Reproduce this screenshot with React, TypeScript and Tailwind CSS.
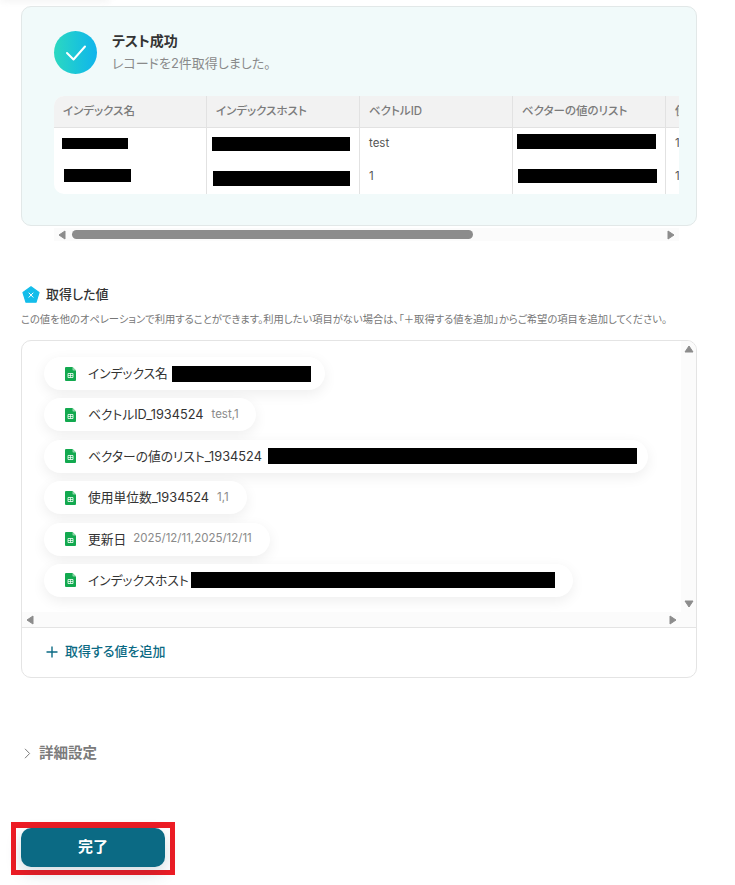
import React from 'react';

const rows = [
  { label: 'インデックス名', bar: 139, value: '', pr: 'pr-[14px]', gap: 'ml-[4px]' },
  { label: 'ベクトルID_1934524', bar: 0, value: 'test,1', pr: 'pr-[17px]', gap: 'ml-[8px]' },
  { label: 'ベクターの値のリスト_1934524', bar: 369, value: '', pr: 'pr-[11px]', gap: 'ml-[6px]' },
  { label: '使用単位数_1934524', bar: 0, value: '1,1', pr: 'pr-[18px]', gap: 'ml-[8px]' },
  { label: '更新日', bar: 0, value: '2025/12/11,2025/12/11', pr: 'pr-[18px]', gap: 'ml-[7px]' },
  { label: 'インデックスホスト', bar: 364, value: '', pr: 'pr-[18px]', gap: 'ml-[2px]' },
];

function Arrow({ dir }: { dir: 'left' | 'right' | 'up' | 'down' }) {
  const pts = {
    left: '8,1 8,9 2,5',
    right: '2,1 2,9 8,5',
    up: '1,8 9,8 5,2',
    down: '1,2 9,2 5,8',
  }[dir];
  return (
    <svg width="10" height="10" viewBox="0 0 10 10" className="shrink-0">
      <polygon points={pts} fill="#8c8c8c" stroke="#8c8c8c" strokeWidth="1" strokeLinejoin="round" />
    </svg>
  );
}

function SheetIcon() {
  return (
    <svg width="11" height="14" viewBox="0 0 11 14" className="shrink-0">
      <path d="M1 0h6.5L11 3.5V13a1 1 0 0 1-1 1H1a1 1 0 0 1-1-1V1a1 1 0 0 1 1-1z" fill="#12a94f" />
      <path d="M7.5 0L11 3.5H8.2a.7.7 0 0 1-.7-.7z" fill="#8ed5a8" />
      <path d="M3 6.5h5v4H3z" fill="none" stroke="#fff" strokeWidth="0.8" />
      <path d="M3 8.5h5M5.5 6.5v4" stroke="#fff" strokeWidth="0.7" />
    </svg>
  );
}

function Pill({ row }: { row: (typeof rows)[number] }) {
  return (
    <div className={`flex h-[33px] w-fit items-center rounded-full bg-white pl-[21px] shadow-[0_4px_14px_rgba(0,0,0,0.07)] ${row.pr}`}>
      <SheetIcon />
      <span className="ml-[12px] whitespace-nowrap text-[12.75px] text-[#333333]">{row.label}</span>
      {row.bar > 0 && <span className={`h-[16px] bg-black ${row.gap}`} style={{ width: row.bar }} />}
      {row.value && <span className={`whitespace-nowrap text-[11.5px] text-[#8a8a8a] ${row.gap}`}>{row.value}</span>}
    </div>
  );
}

const headCell = 'w-[153px] shrink-0 border-r border-[#e2e2e2] pl-[9px] text-[11.5px] font-medium leading-[31px] text-[#7b7b7b] whitespace-nowrap';
const bodyCell = 'relative h-[33px] w-[153px] shrink-0 border-r border-[#e2e2e2] pl-[9px] text-[11.5px] leading-[31px] text-[#555555] whitespace-nowrap';

export default function App() {
  return (
    <div className="relative h-[885px] w-[735px] overflow-hidden bg-white font-['Inter','Noto_Sans_CJK_JP',sans-serif] [font-feature-settings:'palt'] [will-change:opacity]">
      <div className="absolute left-0 top-[-6px] h-[8px] w-[110px] rounded-full bg-[#f4f4f4] blur-[3px]" />

      <div className="pl-[21px] pt-[6px]">
        <div className="h-[220px] w-[676px] rounded-[10px] border border-[#e2e8e8] bg-[#f1fafa] pl-[32px] pt-[24px]">
          <div className="flex items-center gap-[15px]">
            <div className="flex h-[43px] w-[43px] items-center justify-center rounded-full bg-gradient-to-r from-[#2cd8c0] to-[#12b4ec]">
              <svg width="22" height="18" viewBox="0 0 22 18" fill="none">
                <path d="M2 9l6.5 6.5L20 2.5" stroke="#fff" strokeWidth="2" strokeLinecap="round" strokeLinejoin="round" />
              </svg>
            </div>
            <div className="mt-[-1px]">
              <div className="text-[14px] font-bold leading-[20px] text-[#333333]">テスト成功</div>
              <div className="mt-[2px] text-[13px] leading-[20px] text-[#8a8a8a]">レコードを2件取得しました。</div>
            </div>
          </div>

          <div className="mt-[22px] w-[625px] overflow-hidden rounded-l-[10px] bg-white">
            <div className="flex h-[32px] w-[800px] border-b border-[#e2e2e2] bg-[#f2f2f2]">
              <div className={headCell}>インデックス名</div>
              <div className={headCell}>インデックスホスト</div>
              <div className={headCell}>ベクトルID</div>
              <div className={headCell}>ベクターの値のリスト</div>
              <div className={headCell}>使用単位数</div>
            </div>
            <div className="flex w-[800px]">
              <div className={bodyCell}><span className="absolute left-[8px] top-[10px] h-[11px] w-[66px] bg-black" /></div>
              <div className={bodyCell}><span className="absolute left-[5px] top-[9px] h-[14px] w-[138px] bg-black" /></div>
              <div className={bodyCell}>test</div>
              <div className={bodyCell}><span className="absolute left-[4px] top-[6px] h-[15px] w-[139px] bg-black" /></div>
              <div className={bodyCell}>1</div>
            </div>
            <div className="flex w-[800px]">
              <div className={bodyCell}><span className="absolute left-[10px] top-[8px] h-[13px] w-[67px] bg-black" /></div>
              <div className={bodyCell}><span className="absolute left-[6px] top-[10px] h-[15px] w-[137px] bg-black" /></div>
              <div className={bodyCell}>1</div>
              <div className={bodyCell}><span className="absolute left-[5px] top-[8px] h-[14px] w-[139px] bg-black" /></div>
              <div className={bodyCell}>1</div>
            </div>
          </div>
        </div>

        <div className="ml-[33px] mt-[2px] flex h-[13px] w-[625px] items-center bg-[#fbfbfb] pl-[3px] pr-[3px]">
          <Arrow dir="left" />
          <div className="ml-[5px] h-[9px] w-[401px] rounded-full bg-[#8c8c8c]" />
          <div className="flex-1" />
          <Arrow dir="right" />
        </div>

        <div className="ml-[1px] mt-[45px] flex h-[18px] items-center gap-[6px]">
          <svg width="18" height="18" viewBox="0 0 18 18">
            <path d="M9 .8l8 5.7-3 9.7H4L1 6.5z" fill="#14bdea" stroke="#14bdea" strokeWidth="1.2" strokeLinejoin="round" />
            <path d="M7 7l4 4.2M11 7l-4 4.2" stroke="#fff" strokeWidth="1" strokeLinecap="round" />
          </svg>
          <span className="text-[13px] font-medium text-[#333333]">取得した値</span>
        </div>
        <p className="mt-[8px] whitespace-nowrap text-[10.3px] leading-[14px] text-[#777777]">
          この値を他のオペレーションで利用することができます。利用したい項目がない場合は、「＋取得する値を追加」からご希望の項目を追加してください。
        </p>

        <div className="mt-[14px] w-[676px] overflow-hidden rounded-[10px] border border-[#e4e4e4] bg-white">
          <div className="flex h-[286px]">
            <div className="flex flex-1 flex-col">
              <div className="flex flex-1 flex-col gap-[8.4px] pl-[22px] pt-[16px]">
                {rows.map((row) => (
                  <Pill key={row.label} row={row} />
                ))}
              </div>
              <div className="flex h-[15px] items-center justify-between bg-[#fbfbfb] pl-[3px] pr-[3px]">
                <Arrow dir="left" />
                <Arrow dir="right" />
              </div>
            </div>
            <div className="flex w-[15px] flex-col items-center justify-between bg-[#fbfbfb] pb-[18px] pt-[3px]">
              <Arrow dir="up" />
              <Arrow dir="down" />
            </div>
          </div>
          <div className="flex h-[50px] items-center gap-[7px] border-t border-[#e4e4e4] pb-[2px] pl-[24px]">
            <svg width="12" height="12" viewBox="0 0 12 12" fill="none">
              <path d="M6 .5v11M.5 6h11" stroke="#0b6a84" strokeWidth="1.4" />
            </svg>
            <span className="text-[13px] font-medium text-[#0b6a84]">取得する値を追加</span>
          </div>
        </div>

        <div className="ml-[3px] mt-[66px] flex h-[18px] items-center gap-[8px]">
          <svg width="7" height="11" viewBox="0 0 7 11" fill="none">
            <path d="M1 .8l4.6 4.7L1 10.2" stroke="#7b7b7b" strokeWidth="1" />
          </svg>
          <span className="text-[14.5px] font-bold text-[#7b7b7b]">詳細設定</span>
        </div>

        <div className="-ml-[10px] mt-[60px] h-[53px] w-[164px] border-[5px] border-t-[6px] border-[#ed1c24] pl-[5px]">
          <button className="h-[39px] w-[144px] rounded-[10px] bg-[#0b6a84] text-[15px] font-bold text-white shadow-[0_6px_16px_rgba(11,60,90,0.18)]">
            完了
          </button>
        </div>
      </div>
    </div>
  );
}
